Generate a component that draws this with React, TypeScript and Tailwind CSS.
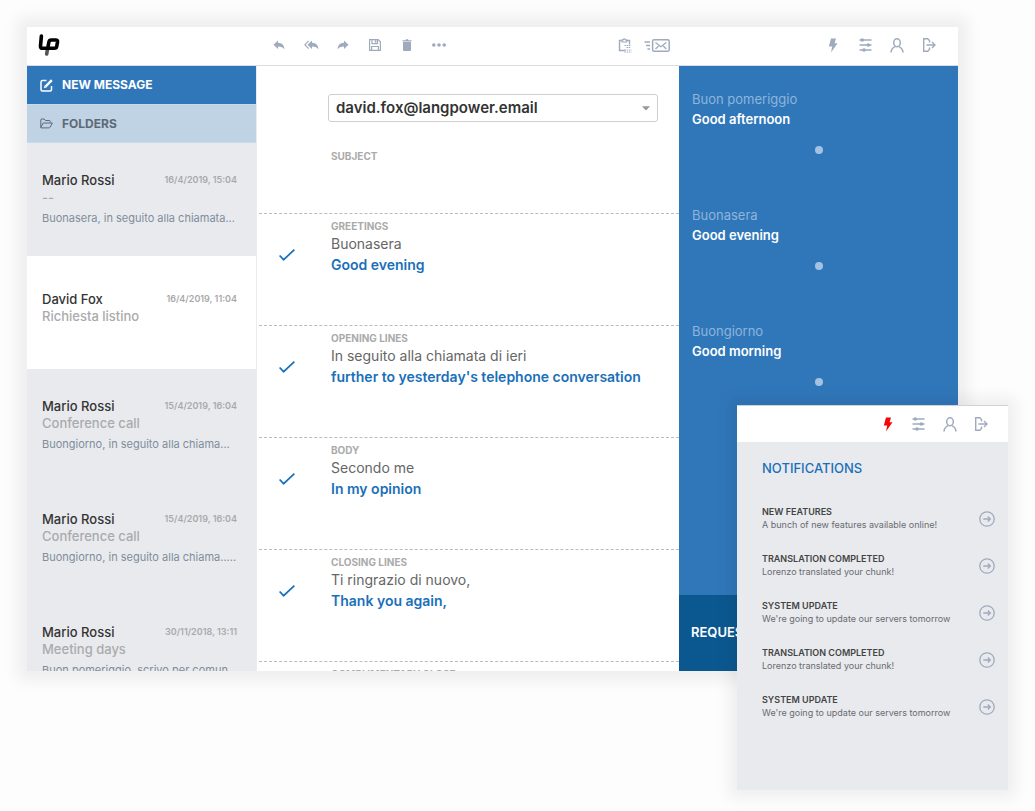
import React from "react";

type IconProps = { className?: string };

const Logo = () => (
  <svg viewBox="0 0 24 24" className="h-6 w-6" fill="none" strokeLinecap="round" strokeWidth="3.6">
    <path d="M9.600 15.500 8.700 21" stroke="#555" />
    <path
      d="M3.400 3 2.500 13q-.2 2.300 2 2.300h11.900q2 0 2.300-1.800l.8-4.400q.3-2.100-1.800-2.100h-4.400q-2 0-2.400 2l-1.200 6.300"
      stroke="#000"
    />
  </svg>
);

const ReplyIcon = () => (
  <svg viewBox="0 0 12 12" className="h-3 w-3" fill="currentColor">
    <path d="M5 1.500v2.300c4 .1 6.300 2.500 6.500 6.700C10 8.300 8.200 7.600 5 7.600V10L.5 5.700z" />
  </svg>
);

const ReplyAllIcon = () => (
  <svg viewBox="0 0 15 12" className="h-3 w-[15px]" fill="currentColor">
    <path d="M8 1.500v2.300c4 .1 6.300 2.500 6.500 6.700C13 8.300 11.200 7.600 8 7.600V10L3.500 5.700z" />
    <path d="M4.600 1.800.9 5.700l3.700 3.900" fill="none" stroke="currentColor" strokeWidth="1.200" />
  </svg>
);

const ForwardIcon = () => (
  <svg viewBox="0 0 12 12" className="h-3 w-3" fill="currentColor">
    <path d="M7 1.500v2.300C3 3.900.7 6.300.5 10.500 2 8.300 3.800 7.600 7 7.600V10l4.500-4.300z" />
  </svg>
);

const SaveIcon = () => (
  <svg viewBox="0 0 12 12" className="h-3 w-3" fill="none" stroke="currentColor" strokeWidth="1.200">
    <path d="M.6.6h8.600l2.200 2.200v8.600H.6z" />
    <path d="M3 .6v4h5.500v-4M2.600 11.400V7.500h6.800v3.900" />
    <path d="M5.800 1.200h1.600v2.400H5.800z" fill="currentColor" stroke="none" />
  </svg>
);

const TrashIcon = () => (
  <svg viewBox="0 0 12 12" className="h-3 w-3" fill="currentColor">
    <path d="M1.500 1.200h3L5 .2h2l.5 1h3v1.400h-9zM2 3h8v8.100q0 .9-.9.9H2.900q-.9 0-.9-.9z" />
  </svg>
);

const MoreIcon = () => (
  <svg viewBox="0 0 14 4" className="h-1 w-3.5" fill="currentColor">
    <circle cx="1.800" cy="2" r="1.800" />
    <circle cx="7" cy="2" r="1.800" />
    <circle cx="12.200" cy="2" r="1.800" />
  </svg>
);

const ClipboardIcon = () => (
  <svg viewBox="0 0 14 15" className="h-[15px] w-3.5" fill="none" stroke="currentColor">
    <path d="M3.500 2.500h-2v10h5.500M8.500 2.500h3v4" strokeWidth="1.400" />
    <path d="M4 4V1.800h1.200q1-2 2.200 0h1.200V4z" strokeWidth="1.200" />
    <path d="M6.500 7.500h6.500M8.500 9.500H13M6.500 12h7M6.500 14h7" strokeDasharray="1.500 .7" />
  </svg>
);

const SendMailIcon = () => (
  <svg viewBox="0 0 26 13" className="h-[13px] w-[26px]" fill="none" stroke="currentColor">
    <rect x="8.600" y=".8" width="16.600" height="11.400" rx="1.500" strokeWidth="1.500" />
    <path d="m11.500 3.500 5.400 4.200 5.400-4.200M11.500 10l3-3M22.300 10l-3-3" strokeWidth="1.300" />
    <path d="M.5 3h5.500M2 6.500h4M3.500 10H6" strokeWidth="1.500" />
  </svg>
);

const BoltIcon = () => (
  <svg viewBox="0 0 10 15" className="h-[15px] w-2.5" fill="currentColor">
    <path d="M3 .5h5L6.600 5.200h2.900L3 14.600l1.200-6H.8z" />
  </svg>
);

const SlidersIcon = () => (
  <svg viewBox="0 0 13 14" className="h-3.5 w-[13px]" stroke="currentColor" fill="currentColor">
    <path d="M.5 2h12M.5 7h12M.5 12h12" strokeWidth="1.400" />
    <circle cx="3.300" cy="2" r="1.800" stroke="none" />
    <circle cx="9.300" cy="7" r="1.800" stroke="none" />
    <circle cx="5" cy="12" r="1.800" stroke="none" />
  </svg>
);

const UserIcon = () => (
  <svg viewBox="0 0 14 15" className="h-[15px] w-3.5" fill="none" stroke="currentColor" strokeWidth="1.500">
    <ellipse cx="7" cy="4.800" rx="3.300" ry="4" />
    <path d="M1 14.500c.2-3.600 2.200-5.200 4.300-5.900M13 14.500c-.2-3.600-2.200-5.200-4.300-5.900" />
  </svg>
);

const LogoutIcon = () => (
  <svg viewBox="0 0 14 14" className="h-3.5 w-3.5" fill="none" stroke="currentColor" strokeWidth="1.400">
    <path d="M7.500 4.500V2.600L5.700.8H1.700v12.400h4l1.800-1.800V9.500" />
    <path d="M4.500 7H13M10 4l3 3-3 3" />
  </svg>
);

const EditIcon = () => (
  <svg viewBox="0 0 13 13" className="h-[13px] w-[13px]" fill="none" stroke="currentColor">
    <path d="M6.500 1.500h-4q-1.500 0-1.500 1.500v7.500q0 1.500 1.500 1.500H10q1.500 0 1.500-1.500V7" strokeWidth="1.500" />
    <path d="m5.500 7.700 6.300-6.500" strokeWidth="2.400" />
    <path d="m3.900 9.200.6-2.600 2 2z" fill="currentColor" stroke="none" />
  </svg>
);

const FolderIcon = () => (
  <svg viewBox="0 0 13 11" className="h-[11px] w-[13px]" fill="none" stroke="currentColor" strokeLinejoin="round">
    <path d="M.8 9.500V2q0-1 1-1h2.400l1.200 1.500h4q.9 0 .9 1v1M.8 9.500 3.200 5h9.200L10 9.300q-.3.600-1 .6H1.300q-.5 0-.5-.4z" />
  </svg>
);

const CheckIcon = () => (
  <svg viewBox="0 0 16 12" className="h-3 w-4" fill="none" stroke="currentColor" strokeWidth="1.700">
    <path d="m.6 6.500 4 4.200L15.400.7" />
  </svg>
);

const ArrowCircleIcon = ({ className }: IconProps) => (
  <svg viewBox="0 0 16 16" className={className} fill="none" stroke="currentColor" strokeWidth="1.300">
    <circle cx="8" cy="8" r="7.200" />
    <path d="M4.300 8h7M8.800 5.500 11.300 8l-2.500 2.500" />
  </svg>
);

const messageActions = [
  { label: "Reply", icon: <ReplyIcon /> },
  { label: "Reply all", icon: <ReplyAllIcon /> },
  { label: "Forward", icon: <ForwardIcon /> },
  { label: "Save", icon: <SaveIcon /> },
  { label: "Delete", icon: <TrashIcon /> },
  { label: "More", icon: <MoreIcon /> },
];

const sendActions = [
  { label: "Copy to clipboard", icon: <ClipboardIcon /> },
  { label: "Send", icon: <SendMailIcon /> },
];

const accountActions = [
  { label: "Settings", icon: <SlidersIcon /> },
  { label: "Profile", icon: <UserIcon /> },
  { label: "Log out", icon: <LogoutIcon /> },
];

const messages = [
  { name: "Mario Rossi", date: "16/4/2019, 15:04", subject: "--", preview: "Buonasera, in seguito alla chiamata..." },
  { name: "David Fox", date: "16/4/2019, 11:04", subject: "Richiesta listino", selected: true },
  { name: "Mario Rossi", date: "15/4/2019, 16:04", subject: "Conference call", preview: "Buongiorno, in seguito alla chiama..." },
  { name: "Mario Rossi", date: "15/4/2019, 16:04", subject: "Conference call", preview: "Buongiorno, in seguito alla chiama....." },
  { name: "Mario Rossi", date: "30/11/2018, 13:11", subject: "Meeting days", preview: "Buon pomeriggio, scrivo per comun..." },
];

const sections = [
  { title: "GREETINGS", source: "Buonasera", target: "Good evening" },
  { title: "OPENING LINES", source: "In seguito alla chiamata di ieri", target: "further to yesterday's telephone conversation" },
  { title: "BODY", source: "Secondo me", target: "In my opinion" },
  { title: "CLOSING LINES", source: "Ti ringrazio di nuovo,", target: "Thank you again," },
];

const suggestions = [
  { source: "Buon pomeriggio", target: "Good afternoon" },
  { source: "Buonasera", target: "Good evening" },
  { source: "Buongiorno", target: "Good morning" },
];

const notifications = [
  { title: "NEW FEATURES", text: "A bunch of new features available online!" },
  { title: "TRANSLATION COMPLETED", text: "Lorenzo translated your chunk!" },
  { title: "SYSTEM UPDATE", text: "We're going to update our servers tomorrow" },
  { title: "TRANSLATION COMPLETED", text: "Lorenzo translated your chunk!" },
  { title: "SYSTEM UPDATE", text: "We're going to update our servers tomorrow" },
];

const IconButton = ({ label, children }: { label: string; children: React.ReactNode }) => (
  <button type="button" aria-label={label} className="flex h-8 w-8 items-center justify-center">
    {children}
  </button>
);

const Header = () => (
  <header className="flex h-[39px] shrink-0 items-center border-b border-[#d9dce2] bg-white pb-0.5 text-[#9fabbd]">
    <div className="flex w-[230px] shrink-0 pl-[11px]">
      <a href="#" aria-label="Home">
        <Logo />
      </a>
    </div>
    <div className="flex flex-1 justify-between px-1.5">
      <div className="flex">
        {messageActions.map((a) => (
          <IconButton key={a.label} label={a.label}>{a.icon}</IconButton>
        ))}
      </div>
      <div className="flex">
        {sendActions.map((a) => (
          <IconButton key={a.label} label={a.label}>{a.icon}</IconButton>
        ))}
      </div>
    </div>
    <div className="flex w-[279px] shrink-0 justify-end pr-[13px]">
      <IconButton label="Notifications"><BoltIcon /></IconButton>
      {accountActions.map((a) => (
        <IconButton key={a.label} label={a.label}>{a.icon}</IconButton>
      ))}
    </div>
  </header>
);

const Sidebar = () => (
  <aside className="flex w-[230px] shrink-0 flex-col border-r border-[#ececf0] bg-[#e8eaee]">
    <button type="button" className="flex h-[38px] shrink-0 items-center gap-[9px] bg-[#3077ba] pl-[13px] text-[12px] font-bold text-white">
      <EditIcon />
      NEW MESSAGE
    </button>
    <button type="button" className="flex h-[39px] shrink-0 items-center gap-[9px] border-y border-[#c9d9e8] bg-[#c0d3e5] pl-[13px] text-[12px] font-bold text-[#5d6977]">
      <FolderIcon />
      FOLDERS
    </button>
    <ul className="min-h-0 flex-1 overflow-hidden">
      {messages.map((m, i) => (
        <li
          key={i}
          className={`h-[113px] pl-[15px] pr-[19px] ${m.selected ? "bg-white pt-[34px]" : "pt-7"}`}
        >
          <div className="flex items-center justify-between leading-[18px]">
            <span className="text-[13px] font-medium text-[#333]">{m.name}</span>
            <span className="text-[9px] font-semibold text-[#a9a9ab]">{m.date}</span>
          </div>
          <p className="text-[13px] font-medium leading-4 text-[#aaaaac]">{m.subject}</p>
          {m.preview && (
            <p className="mt-[5px] whitespace-nowrap text-[11px] leading-4 text-[#808d9b]">{m.preview}</p>
          )}
        </li>
      ))}
    </ul>
  </aside>
);

const Composer = () => (
  <section className="min-w-0 flex-1 overflow-hidden bg-white pl-0.5">
    <div className="h-[148px] border-b border-dashed border-[#bbb] pl-[69px] pr-[21px] pt-7">
      <div className="relative">
        <select
          aria-label="Recipient"
          className="h-7 w-full appearance-none rounded-[3px] border border-[#cfcfcf] bg-white px-[7px] text-[15px] font-semibold text-[#333]"
        >
          <option>david.fox@langpower.email</option>
        </select>
        <svg viewBox="0 0 8 5" className="pointer-events-none absolute right-2 top-3 h-[5px] w-2" fill="#999">
          <path d="M0 .3h8L4 4.500z" />
        </svg>
      </div>
      <div className="flex flex-col pl-[3px] pt-[27px]">
        <label htmlFor="subject" className="text-[10px] font-bold leading-[14px] text-[#aaa]">SUBJECT</label>
        <input id="subject" type="text" className="h-6 text-[14px] text-[#666] outline-none" />
      </div>
    </div>
    {sections.map((s) => (
      <div key={s.title} className="flex h-28 border-b border-dashed border-[#bbb] pt-[5px]">
        <button type="button" aria-label={`Confirm ${s.title.toLowerCase()}`} className="mt-6 flex h-6 w-14 items-center justify-center text-[#1a70b8]">
          <CheckIcon />
        </button>
        <div className="pl-4">
          <h3 className="text-[10px] font-bold leading-[14px] text-[#aaa]">{s.title}</h3>
          <p className="text-[14px] leading-[22px] text-[#666]">{s.source}</p>
          <p className="text-[14px] font-semibold leading-5 text-[#1a70b8]">{s.target}</p>
        </div>
      </div>
    ))}
    <h3 className="pl-[72px] pt-[5px] text-[10px] font-bold leading-[14px] text-[#aaa]">COMPLIMENTARY CLOSE</h3>
  </section>
);

const Suggestions = () => (
  <aside className="flex w-[279px] shrink-0 flex-col bg-[#3077ba]">
    {suggestions.map((s) => (
      <div key={s.target} className="h-[116px] px-[13px] pt-6">
        <p className="text-[13px] leading-[18px] text-[#8db5da]">{s.source}</p>
        <p className="text-[13px] font-semibold leading-[22px] text-white">{s.target}</p>
        <div className="mx-auto mt-4 h-2 w-2 rounded-full bg-[#a3c2e0]" />
      </div>
    ))}
    <button type="button" className="mt-auto h-[76px] bg-[#0b5890] pl-3 text-left text-[13px] font-semibold text-white">
      REQUEST
    </button>
  </aside>
);

const Notifications = () => (
  <section className="absolute right-[27px] top-[405px] w-[271px] border-t border-[#d2d2d2] bg-[#e8eaee] pb-[60px] shadow-[0_0_14px_8px_rgba(0,0,0,0.06)]">
    <div className="flex h-9 items-center justify-end bg-white pr-3 text-[#9fabbd]">
      <button type="button" aria-label="Notifications" className="flex h-8 w-[31px] items-center justify-center text-[#f50505]">
        <BoltIcon />
      </button>
      {accountActions.map((a) => (
        <button key={a.label} type="button" aria-label={a.label} className="flex h-8 w-[31px] items-center justify-center">
          {a.icon}
        </button>
      ))}
    </div>
    <h2 className="pl-[25px] pt-4 text-[13px] font-medium leading-5 text-[#1a70b8]">NOTIFICATIONS</h2>
    <ul className="pl-[25px] pr-[13px] pt-[17px]">
      {notifications.map((n, i) => (
        <li key={i} className="flex h-[47px] items-center justify-between">
          <div>
            <h3 className="text-[9px] font-semibold leading-3 text-[#444]">{n.title}</h3>
            <p className="text-[9px] leading-[13px] text-[#6a6a6e]">{n.text}</p>
          </div>
          <button type="button" aria-label={`Open ${n.title.toLowerCase()}`} className="text-[#9fabbd]">
            <ArrowCircleIcon className="h-4 w-4" />
          </button>
        </li>
      ))}
    </ul>
  </section>
);

export default function App() {
  return (
    <main className="relative h-screen min-h-[811px] bg-[#fdfdfd] pb-[140px] pl-[27px] pr-[77px] pt-[27px] font-['Inter',sans-serif]">
      <div className="flex h-full flex-col shadow-[0_0_14px_10px_rgba(0,0,0,0.06)]">
        <Header />
        <div className="flex min-h-0 flex-1">
          <Sidebar />
          <Composer />
          <Suggestions />
        </div>
      </div>
      <Notifications />
    </main>
  );
}
